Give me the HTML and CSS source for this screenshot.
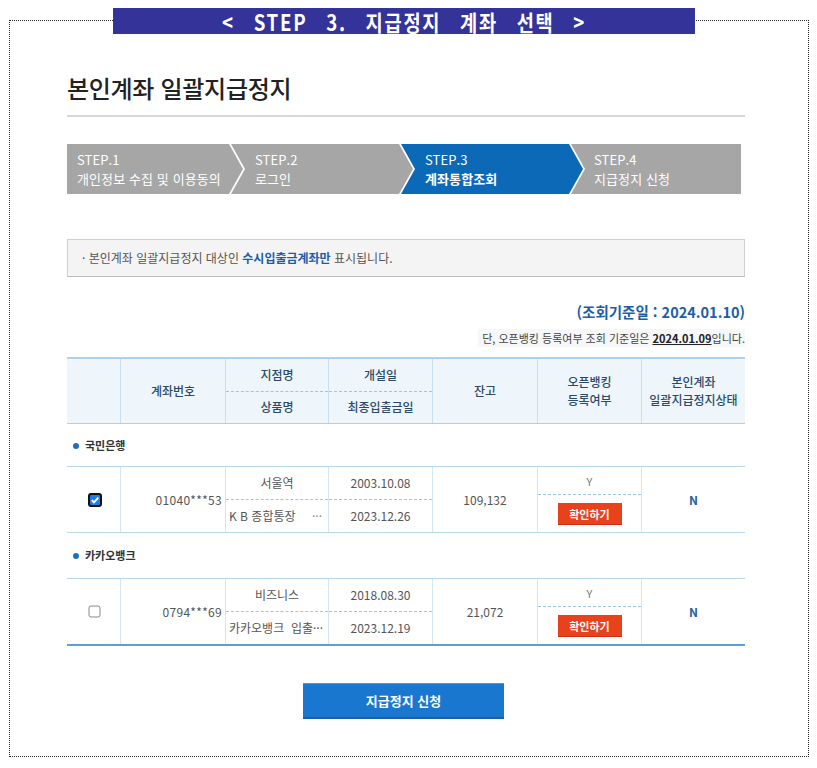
FILE: index.html
```html
<!DOCTYPE html>
<html lang="ko">
<head>
<meta charset="utf-8">
<title>본인계좌 일괄지급정지</title>
<link rel="stylesheet" href="styles.css">
</head>
<body>
<div class="frame">
  <div class="banner"><span class="banner-text">&lt; STEP 3. 지급정지 계좌 선택 &gt;</span></div>

  <div class="content">
    <h1 class="title">본인계좌 일괄지급정지</h1>

    <div class="steps">
      <div class="step first"><span>STEP.1</span><span>개인정보 수집 및 이용동의</span></div>
      <div class="step s2"><span>STEP.2</span><span>로그인</span></div>
      <div class="step s3 active"><span>STEP.3</span><span class="b">계좌통합조회</span></div>
      <div class="step last"><span>STEP.4</span><span>지급정지 신청</span></div>
    </div>

    <div class="notice">· 본인계좌 일괄지급정지 대상인 <strong>수시입출금계좌만</strong> 표시됩니다.</div>

    <p class="basedate">(조회기준일 : 2024.01.10)</p>
    <div class="subnote-wrap"><p class="subnote">단, 오픈뱅킹 등록여부 조회 기준일은 <u>2024.01.09</u>입니다.</p></div>

    <div class="table">
      <div class="row head">
        <div class="cell"></div>
        <div class="cell">계좌번호</div>
        <div class="cell split"><div class="half">지점명</div><div class="half">상품명</div></div>
        <div class="cell split"><div class="half">개설일</div><div class="half">최종입출금일</div></div>
        <div class="cell">잔고</div>
        <div class="cell">오픈뱅킹<br>등록여부</div>
        <div class="cell">본인계좌<br>일괄지급정지상태</div>
      </div>

      <div class="group">국민은행</div>
      <div class="row body">
        <div class="cell">
          <svg class="chk" width="14" height="14" viewBox="0 0 14 14"><rect x="1" y="1" width="12" height="12" rx="2" fill="#1d7fe6" stroke="#111" stroke-width="2"/><path d="M3.8 7.2 L6 9.4 L10.3 4.6" fill="none" stroke="#fff" stroke-width="1.8"/></svg>
        </div>
        <div class="cell acct">01040***53</div>
        <div class="cell split"><div class="half">서울역</div><div class="half left"><span>K B 종합통장</span><span class="dots">···</span></div></div>
        <div class="cell split"><div class="half">2003.10.08</div><div class="half">2023.12.26</div></div>
        <div class="cell">109,132</div>
        <div class="cell ob"><div class="yes">Y</div><div class="btnwrap"><span class="confirm">확인하기</span></div></div>
        <div class="cell status">N</div>
      </div>

      <div class="group g2">카카오뱅크</div>
      <div class="row body last">
        <div class="cell">
          <svg class="chk" width="13" height="13" viewBox="0 0 13 13"><rect x="1" y="1" width="11" height="11" rx="2" fill="#fff" stroke="#888" stroke-width="1"/></svg>
        </div>
        <div class="cell acct">0794***69</div>
        <div class="cell split"><div class="half">비즈니스</div><div class="half left"><span>카카오뱅크&nbsp;&nbsp;입출···</span></div></div>
        <div class="cell split"><div class="half">2018.08.30</div><div class="half">2023.12.19</div></div>
        <div class="cell">21,072</div>
        <div class="cell ob"><div class="yes">Y</div><div class="btnwrap"><span class="confirm">확인하기</span></div></div>
        <div class="cell status">N</div>
      </div>
    </div>

    <div class="actions"><button class="submit">지급정지 신청</button></div>
  </div>
</div>
</body>
</html>
```

FILE: styles.css
```css
* { box-sizing: border-box; }
html, body { margin: 0; padding: 0; background: #fff; }
body {
  font-family: "Noto Sans CJK KR", "Noto Sans", sans-serif;
  color: #333;
  width: 817px;
  height: 768px;
  overflow: hidden;
}
.frame {
  margin: 20px 0 0 9px;
  width: 800px;
  height: 737px;
  border: 1px dotted #222;
  padding: 0 62px 0 57px;
}
.banner {
  width: 582px;
  height: 26px;
  margin: -13px 0 0 46px;
  background: #333399;
  color: #fff;
  display: flex;
  justify-content: center;
  align-items: center;
}
.banner-text {
  display: inline-block;
  font-weight: 700;
  font-size: 22px;
  line-height: 26px;
  white-space: nowrap;
  letter-spacing: 2px;
  word-spacing: 14px;
  transform: scaleX(0.85);
}
.content { width: 678px; }
.title {
  margin: 38px 0 0;
  padding-bottom: 11px;
  border-bottom: 2px solid #d8d8d8;
  font-size: 24px;
  line-height: 32px;
  font-weight: 500;
  letter-spacing: -0.3px;
  color: #222;
}
.steps {
  display: flex;
  width: 674px;
  height: 50px;
  margin-top: 27px;
}
.step {
  flex: 0 0 182px;
  margin-left: -12px;
  padding: 6px 0 0 24px;
  background: #a6a6a6;
  color: #fff;
  font-size: 13px;
  line-height: 19px;
  letter-spacing: 0.1px;
  display: flex;
  flex-direction: column;
  clip-path: polygon(0 0, calc(100% - 14px) 0, 100% 50%, calc(100% - 14px) 100%, 0 100%, 14px 50%);
}
.step.first {
  flex-basis: 176px;
  margin-left: 0;
  padding-left: 10px;
  clip-path: polygon(0 0, calc(100% - 14px) 0, 100% 50%, calc(100% - 14px) 100%, 0 100%);
}
.step.last {
  flex: 1 1 auto;
  padding-left: 23px;
  clip-path: polygon(0 0, 100% 0, 100% 100%, 0 100%, 14px 50%);
}
.step.active { background: #0b69b7; }
.step .b { font-weight: 700; }
.notice {
  margin-top: 45px;
  height: 38px;
  border: 1px solid #cfcfcf;
  border-bottom-color: #bdbdbd;
  background: #f4f4f4;
  padding-left: 14px;
  font-size: 12px;
  line-height: 36px;
  color: #555;
}
.notice strong { color: #1b5ea8; font-weight: 700; }
.basedate {
  margin: 25px 0 0;
  text-align: right;
  font-size: 14.5px;
  line-height: 20px;
  font-weight: 700;
  color: #1b5ea8;
}
.subnote-wrap {
  display: flex;
  justify-content: flex-end;
  margin-top: 7px;
}
.subnote {
  margin: 0;
  padding: 0 0 0 4px;
  background: #f6f7f9;
  font-size: 11px;
  line-height: 18px;
  color: #444;
}
.subnote u { font-weight: 700; color: #222; }
.table { margin-top: 10px; }
.row {
  display: grid;
  grid-template-columns: 53px 105px 103px 104px 105px 104px 104px;
}
.row.head {
  height: 67px;
  border-top: 2px solid #a9d2ee;
  border-bottom: 1px solid #a9d2ee;
  background: #eef6fc;
  color: #2b4a6a;
  font-size: 12px;
  font-weight: 500;
}
.row.head .cell { line-height: 18px; }
.cell {
  display: flex;
  align-items: center;
  justify-content: center;
  text-align: center;
  border-left: 1px solid #c5def1;
  line-height: 16px;
}
.cell:first-child { border-left: none; }
.split { flex-direction: column; align-items: stretch; }
.half {
  flex: 1;
  display: flex;
  align-items: center;
  justify-content: center;
}
.half:first-child { border-bottom: 1px dashed #9ec6e4; }
.half.left { justify-content: space-between; padding: 0 6px 0 3px; white-space: nowrap; }
.half .dots { color: #888; }
.group {
  height: 42px;
  line-height: 42px;
  padding-left: 6px;
  font-size: 11px;
  font-weight: 700;
  color: #333;
}
.group::before {
  content: "";
  display: inline-block;
  width: 6px;
  height: 6px;
  border-radius: 50%;
  background: #1a6fc0;
  margin-right: 6px;
  vertical-align: 1px;
}
.group.g2 { height: 45px; line-height: 45px; }
.row.body {
  height: 67px;
  border-top: 1px solid #b8d8ee;
  border-bottom: 1px solid #b8d8ee;
  font-size: 12px;
  color: #555;
}
.row.body.last {
  height: 68px;
  border-bottom: 2px solid #5e9fd6;
}
.row.body .cell { border-left-color: #d3e6f4; }
.acct { justify-content: flex-end; padding-right: 3px; letter-spacing: 0.3px; }
.chk { display: block; margin-left: 2px; }
.ob { flex-direction: column; align-items: stretch; }
.ob .yes {
  height: 28px;
  display: flex;
  align-items: center;
  justify-content: center;
  border-bottom: 1px dashed #9ec6e4;
  font-size: 11px;
  color: #777;
}
.btnwrap { flex: 1; display: flex; align-items: center; justify-content: center; }
.confirm {
  display: inline-block;
  width: 64px;
  height: 22px;
  line-height: 22px;
  background: #e8421c;
  color: #fff;
  font-size: 11px;
  font-weight: 700;
  text-align: center;
  border-bottom: 1px solid #c8300e;
}
.status { font-weight: 700; color: #2a5fa0; font-size: 12px; }
.actions { display: flex; justify-content: center; margin-top: 37px; padding-right: 5px; }
.submit {
  width: 201px;
  height: 36px;
  border: none;
  border-top: 1px solid #4a9ae6;
  border-bottom: 2px solid #1b5fa5;
  background: #1a77d0;
  color: #fff;
  font-family: "Noto Sans CJK KR", sans-serif;
  font-size: 13px;
  font-weight: 700;
}
```
